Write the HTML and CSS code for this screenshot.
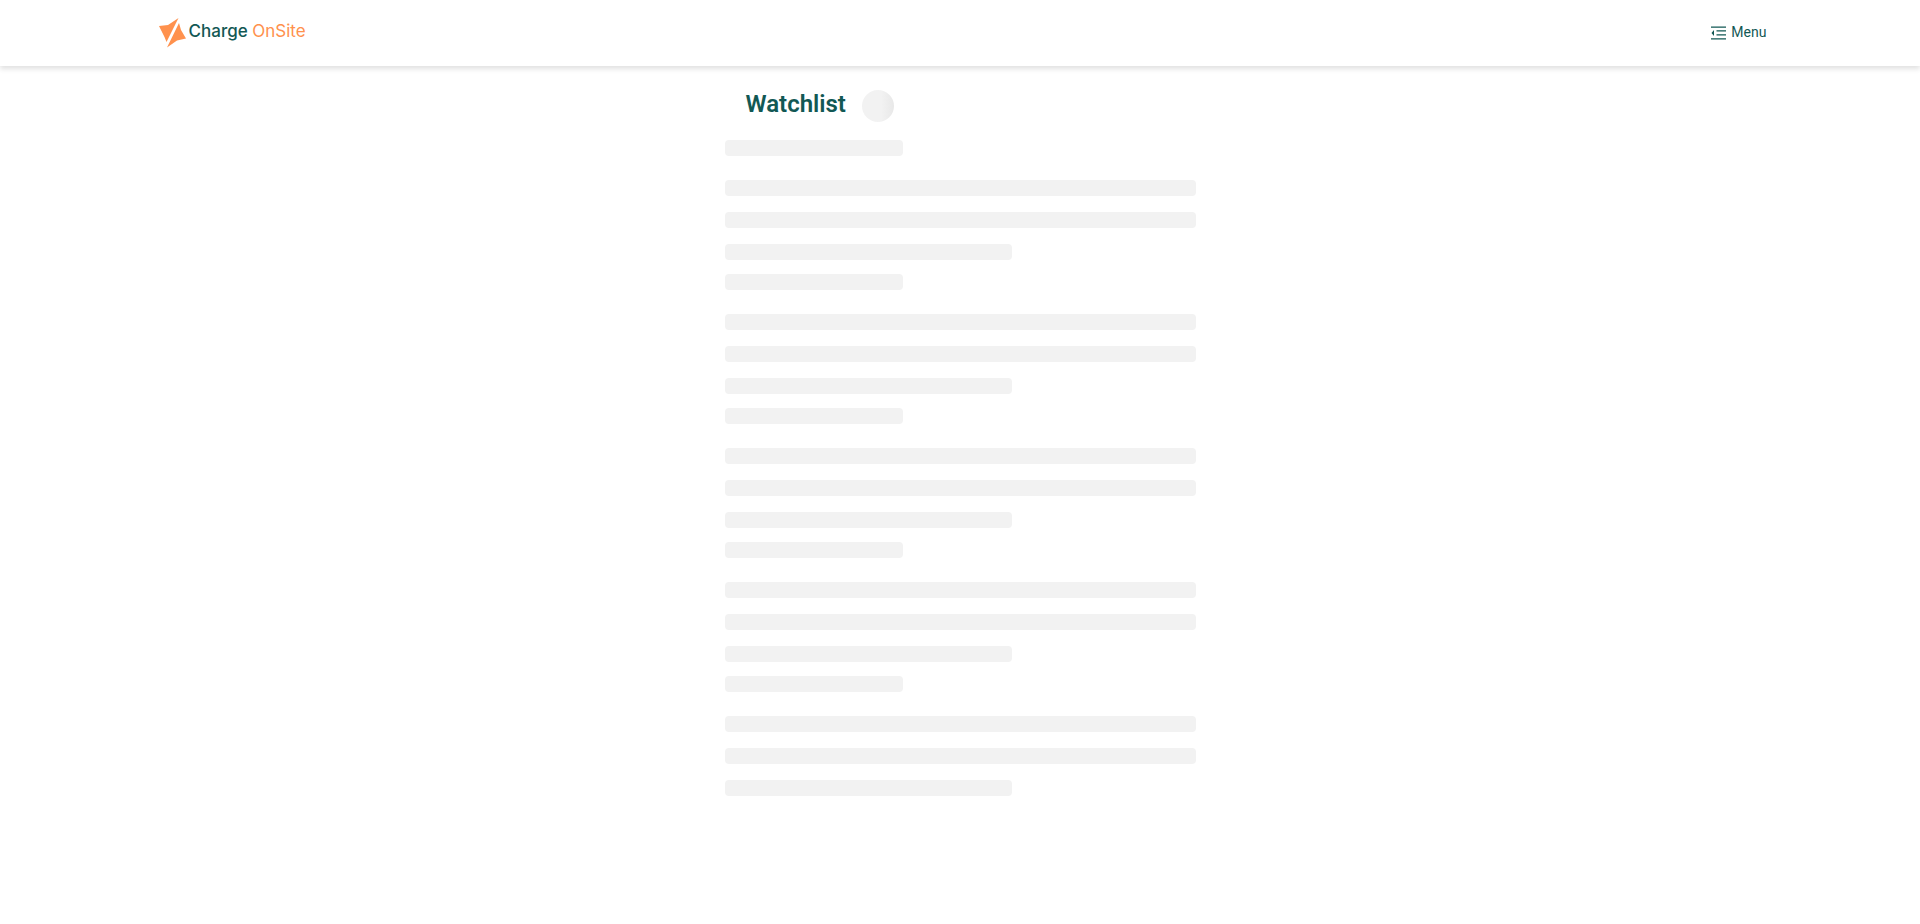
FILE: index.html
```html
<!DOCTYPE html>
<html lang="en">
<head>
<meta charset="utf-8">
<meta name="viewport" content="width=device-width, initial-scale=1">
<title>Watchlist - Charge OnSite</title>
<link rel="stylesheet" href="styles.css">
</head>
<body>
<header class="header">
  <div class="header-inner">
    <a class="logo" href="#">
      <svg class="logo-mark" viewBox="0 0 28 30" aria-hidden="true">
        <path d="M0 8 L9 7 L19.500 0 L7.500 24 L5.500 19 Z"/>
        <path d="M20 5 L22 12 L27 20.500 L18 22.500 L8 29.500 Z"/>
      </svg>
      <span class="logo-text">Charge <span class="logo-accent">OnSite</span></span>
    </a>
    <button class="menu" type="button">
      <svg class="menu-icon" viewBox="0 0 16 14" aria-hidden="true">
        <path d="M1 0.500h15v1.300H1zM6.500 4.300h9.500v1.200H6.500zM6.500 8.300h9.500v1.200H6.500zM1 12.300h15v1.300H1zM1.500 7l2.500-3v6z"/>
      </svg>
      <span class="menu-label">Menu</span>
    </button>
  </div>
</header>
<main class="content">
  <div class="heading">
    <h1 class="title">Watchlist</h1>
    <span class="avatar"></span>
  </div>
  <div class="skeletons" aria-busy="true">
    <div class="skeleton"><div class="bar bar-title"></div><div class="bar"></div><div class="bar"></div><div class="bar bar-last"></div></div>
    <div class="skeleton"><div class="bar bar-title"></div><div class="bar"></div><div class="bar"></div><div class="bar bar-last"></div></div>
    <div class="skeleton"><div class="bar bar-title"></div><div class="bar"></div><div class="bar"></div><div class="bar bar-last"></div></div>
    <div class="skeleton"><div class="bar bar-title"></div><div class="bar"></div><div class="bar"></div><div class="bar bar-last"></div></div>
    <div class="skeleton"><div class="bar bar-title"></div><div class="bar"></div><div class="bar"></div><div class="bar bar-last"></div></div>
  </div>
</main>
</body>
</html>
```
FILE: styles.css
```css
* { box-sizing: border-box; }
body {
  margin: 0;
  background: #fff;
  color: #125854;
  font-family: Roboto, sans-serif;
}
.header {
  background: #fff;
  box-shadow: 0 3px 5px rgba(0, 0, 0, 0.12);
}
.header-inner {
  display: flex;
  align-items: center;
  justify-content: space-between;
  height: 66px;
  padding: 0 8%;
}
.logo {
  display: flex;
  align-items: center;
  gap: 2px;
  padding-left: 5px;
  color: inherit;
  text-decoration: none;
}
.logo-mark { width: 28px; height: 30px; fill: #ff914d; }
.logo-text { padding-bottom: 4px; font: 500 17px/24px Inter, sans-serif; }
.logo-accent { color: #ff914d; font-weight: 400; }
.menu {
  display: flex;
  align-items: center;
  gap: 5px;
  padding: 0;
  border: 0;
  background: none;
  color: inherit;
  font: 400 14px/22px Roboto, sans-serif;
  cursor: pointer;
}
.menu-icon { width: 16px; height: 14px; fill: currentColor; }
.menu-label { padding-bottom: 2px; }
.content {
  width: 471px;
  max-width: 100%;
  margin: 0 auto;
  padding: 24px 0;
}
.heading {
  display: flex;
  gap: 16px;
  padding-left: 21px;
}
.title { margin: 0; font-size: 24px; line-height: 28px; font-weight: 600; }
.avatar {
  width: 32px;
  height: 32px;
  border-radius: 50%;
  background: linear-gradient(90deg, #f2f2f2 60%, #e8e8e8);
}
.skeletons { display: grid; gap: 14px; padding-top: 18px; }
.skeleton { display: grid; gap: 16px; }
.bar { height: 16px; border-radius: 4px; background: #f2f2f2; }
.bar-title { width: 38%; margin-bottom: 8px; }
.bar-last { width: 61%; }
```
